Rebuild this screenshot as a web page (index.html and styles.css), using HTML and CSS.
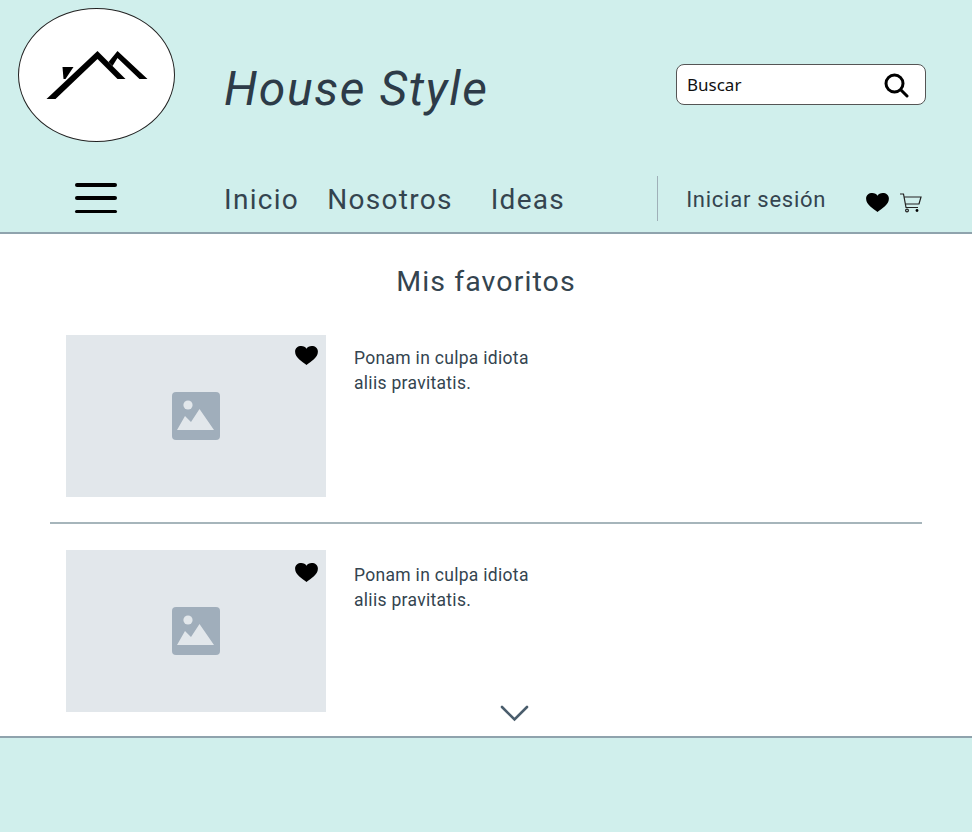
FILE: index.html
```html
<!DOCTYPE html>
<html lang="es">
<head>
  <meta charset="UTF-8">
  <meta name="viewport" content="width=device-width, initial-scale=1.0">
  <title>House Style</title>
  <link rel="stylesheet" href="styles.css">
</head>
<body>
  <header class="site-header">
    <div class="top-row">
      <div class="logo">
        <svg width="110" height="60" viewBox="41.5 45 110 60">
          <path d="M46 99 L97 51 L125 79 L117 79 L97 59 L55 99 Z"/>
          <path d="M108 62 L117 51 L147 79 L139 79 L117 58 L112 66 Z"/>
          <path d="M62 67 L73 67 L65 79 L63 79 Z"/>
        </svg>
      </div>
      <h1 class="brand">House Style</h1>
      <div class="search">
        <span>Buscar</span>
        <svg width="26" height="26" viewBox="0 0 26 26">
          <circle cx="11.5" cy="11.5" r="8.5" class="search-icon"/>
          <path d="M18 18 L24 24" class="search-icon"/>
        </svg>
      </div>
    </div>
    <nav class="nav-row">
      <div class="burger"><span></span><span></span><span></span></div>
      <a class="nav-link nav-inicio">Inicio</a>
      <a class="nav-link nav-nosotros">Nosotros</a>
      <a class="nav-link">Ideas</a>
      <div class="nav-divider"></div>
      <a class="login">Iniciar sesión</a>
      <svg class="nav-heart" width="23" height="19" viewBox="0 0 24 20">
        <path d="M12 20 C8 16.5 0 12.5 0 6 C0 2 3 0 6.5 0 C9 0 11 1 12 3 C13 1 15 0 17.5 0 C21 0 24 2 24 6 C24 12.5 16 16.5 12 20 Z"/>
      </svg>
      <svg class="cart" width="23" height="20" viewBox="0 0 23 20">
        <path d="M1 1 H4.5 L7 14.5 H19 M5 4 H22 L20 11 H6.5" class="cart-line"/>
        <circle cx="8" cy="17.5" r="1.4" class="cart-line"/>
        <circle cx="18" cy="17.5" r="1.4"/>
      </svg>
    </nav>
  </header>

  <main class="content">
    <h2 class="page-title">Mis favoritos</h2>

    <article class="fav-item">
      <div class="thumb">
        <svg class="thumb-heart" width="23" height="19" viewBox="0 0 24 20">
          <path d="M12 20 C8 16.5 0 12.5 0 6 C0 2 3 0 6.5 0 C9 0 11 1 12 3 C13 1 15 0 17.5 0 C21 0 24 2 24 6 C24 12.5 16 16.5 12 20 Z"/>
        </svg>
        <svg width="48" height="48" viewBox="0 0 48 48">
          <rect width="48" height="48" rx="4" fill="#a0aebb"/>
          <circle cx="16" cy="13" r="4.6" fill="#e2e7eb"/>
          <path d="M5 38 L13 24 L19 30 L27.5 17 L42 38 Z" fill="#e2e7eb"/>
        </svg>
      </div>
      <p class="fav-text">Ponam in culpa idiota<br>aliis pravitatis.</p>
    </article>

    <hr class="separator">

    <article class="fav-item fav-item-low">
      <div class="thumb">
        <svg class="thumb-heart" width="23" height="19" viewBox="0 0 24 20">
          <path d="M12 20 C8 16.5 0 12.5 0 6 C0 2 3 0 6.5 0 C9 0 11 1 12 3 C13 1 15 0 17.5 0 C21 0 24 2 24 6 C24 12.5 16 16.5 12 20 Z"/>
        </svg>
        <svg width="48" height="48" viewBox="0 0 48 48">
          <rect width="48" height="48" rx="4" fill="#a0aebb"/>
          <circle cx="16" cy="13" r="4.6" fill="#e2e7eb"/>
          <path d="M5 38 L13 24 L19 30 L27.5 17 L42 38 Z" fill="#e2e7eb"/>
        </svg>
      </div>
      <p class="fav-text">Ponam in culpa idiota<br>aliis pravitatis.</p>
    </article>

    <svg class="more" width="29" height="17" viewBox="0 0 29 17">
      <path d="M2 2 L14.5 14.5 L27 2"/>
    </svg>
  </main>

  <footer class="site-footer"></footer>
</body>
</html>
```

FILE: styles.css
```css
body {
  font-family: Roboto, "Noto Sans", sans-serif;
  margin: 0;
  height: 832px;
  display: flex;
  flex-direction: column;
  background-color: #fff;
  color: #2d3b48;
}

.site-header {
  height: 232px;
  background-color: #d0efec;
  border-bottom: 2px solid #8fa3ad;
}

.top-row {
  display: flex;
  align-items: center;
  height: 150px;
  padding-left: 18px;
}

.logo {
  width: 157px;
  height: 134px;
  box-sizing: border-box;
  border: 1px solid #222;
  border-radius: 50%;
  background-color: #fff;
  display: flex;
  justify-content: center;
  padding-top: 36px;
}

.brand {
  margin: 26px 0 0 49px;
  width: 452px;
  font-size: 48px;
  font-weight: 400;
  font-style: italic;
  letter-spacing: 1.6px;
}

.search {
  width: 250px;
  height: 41px;
  margin-top: 19px;
  box-sizing: border-box;
  border: 1px solid #555;
  border-radius: 8px;
  background-color: #fff;
  display: flex;
  align-items: center;
  justify-content: space-between;
  padding: 0 16px 0 10px;
  font-family: "Noto Sans", sans-serif;
  font-size: 17px;
  color: #111;
}

.search-icon {
  fill: none;
  stroke: #000;
  stroke-width: 3;
  stroke-linecap: round;
}

.nav-row {
  display: flex;
  align-items: center;
  box-sizing: border-box;
  height: 82px;
  padding: 14px 0 0 75px;
}

.burger {
  width: 42px;
  height: 30px;
  margin-right: 107px;
  display: flex;
  flex-direction: column;
  justify-content: space-between;
}

.burger span {
  height: 3.5px;
  border-radius: 2px;
  background-color: #000;
}

.nav-link {
  margin-top: 2px;
  font-size: 28px;
  letter-spacing: 1.3px;
  color: #34444f;
}

.nav-inicio {
  margin-right: 28px;
}

.nav-nosotros {
  margin-right: 38px;
}

.nav-divider {
  width: 1px;
  height: 45px;
  margin: 0 28px 0 92px;
  background-color: #9fb0b8;
}

.login {
  margin-top: 2px;
  font-size: 22px;
  letter-spacing: 0.75px;
  color: #34444f;
}

.nav-heart {
  margin: 9px 0 0 40px;
}

.cart {
  margin: 9px 0 0 10px;
}

.cart-line {
  fill: none;
  stroke: #222;
  stroke-width: 1.2;
}

.content {
  position: relative;
  height: 502px;
  box-sizing: border-box;
  padding: 0 50px;
}

.page-title {
  margin: 27px 0 33px;
  height: 41px;
  line-height: 41px;
  text-align: center;
  font-size: 28.5px;
  font-weight: 400;
  letter-spacing: 1.1px;
  color: #34444f;
}

.fav-item {
  display: flex;
  gap: 28px;
  padding-left: 16px;
}

.thumb {
  position: relative;
  width: 260px;
  height: 162px;
  flex-shrink: 0;
  background-color: #e2e7eb;
  display: flex;
  align-items: center;
  justify-content: center;
}

.thumb-heart {
  position: absolute;
  top: 11px;
  right: 8px;
}

.fav-text {
  margin: 11px 0 0;
  font-size: 17.5px;
  line-height: 25px;
  letter-spacing: 0.3px;
  color: #34444f;
}

.fav-item-low .thumb-heart {
  top: 13px;
}

.fav-item-low .fav-text {
  margin-top: 13px;
}

.separator {
  margin: 25px 0 26px;
  border: none;
  border-top: 2px solid #a6b5bb;
}

.more {
  position: absolute;
  left: 500px;
  top: 471px;
  fill: none;
  stroke: #4a5d6c;
  stroke-width: 2.6;
  stroke-linecap: round;
}

.site-footer {
  flex: 1;
  background-color: #d0efec;
  border-top: 2px solid #8fa3ad;
}
```
